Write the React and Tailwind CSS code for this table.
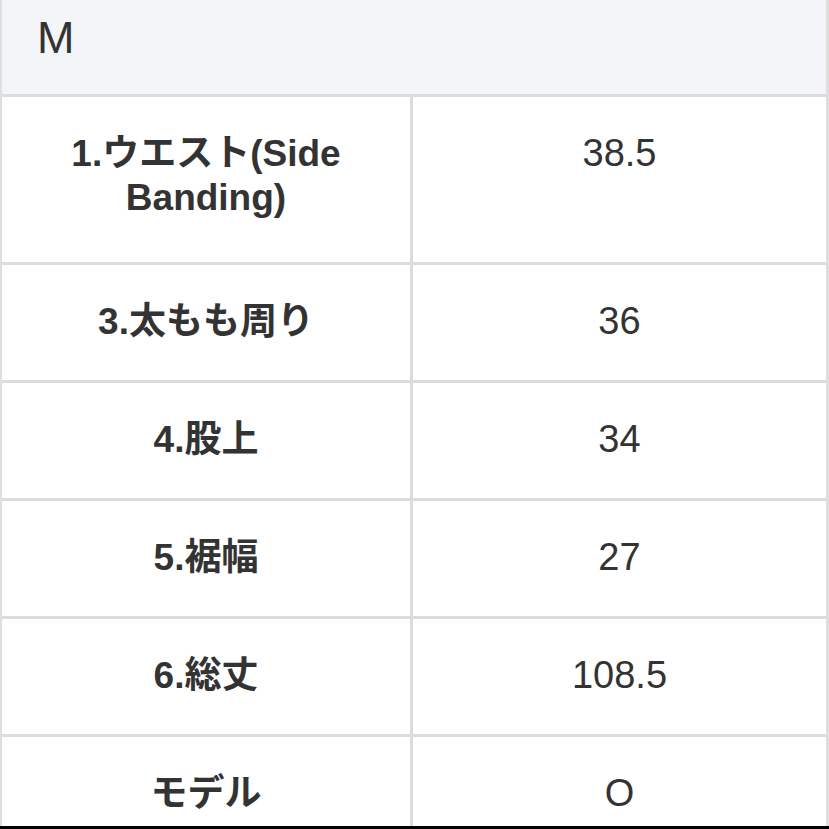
export default function App() {
  const rows = [
    { label: ["1.ウエスト(Side", "Banding)"], value: "38.5", h: "h-[168px]" },
    { label: ["3.太もも周り"], value: "36", h: "h-[118px]" },
    { label: ["4.股上"], value: "34", h: "h-[118px]" },
    { label: ["5.裾幅"], value: "27", h: "h-[118px]" },
    { label: ["6.総丈"], value: "108.5", h: "h-[118px]" },
    { label: ["モデル"], value: "O", h: "h-[118px]", last: true },
  ];
  const font = { fontFamily: '"Liberation Sans", "Noto Sans CJK JP", sans-serif' };
  return (
    <div className="w-[829px] h-[829px] bg-black overflow-hidden" style={font}>
      <div className="h-[826px] bg-white border-l-[2px] border-r-[3px] border-[#dedede] overflow-hidden text-[#333]">
        <div className="h-[97px] bg-[#f4f5f9] border-b-[3px] border-[#dcdcdc] pl-[35px] pt-[13px] text-[45px] leading-[50px] font-normal">
          M
        </div>
        {rows.map((r, i) => (
          <div key={i} className={`grid grid-cols-[411px_1fr] ${r.h} ${r.last ? "" : "border-b-[3px] border-[#dcdcdc]"}`}>
            <div className="border-r-[3px] border-[#dcdcdc] pt-[35px] text-center font-bold text-[37px] leading-[44px]">
              {r.label.map((l, j) => (
                <div key={j}>{l}</div>
              ))}
            </div>
            <div className="pt-[34px] text-center text-[38px] leading-[44px]">{r.value}</div>
          </div>
        ))}
      </div>
    </div>
  );
}
